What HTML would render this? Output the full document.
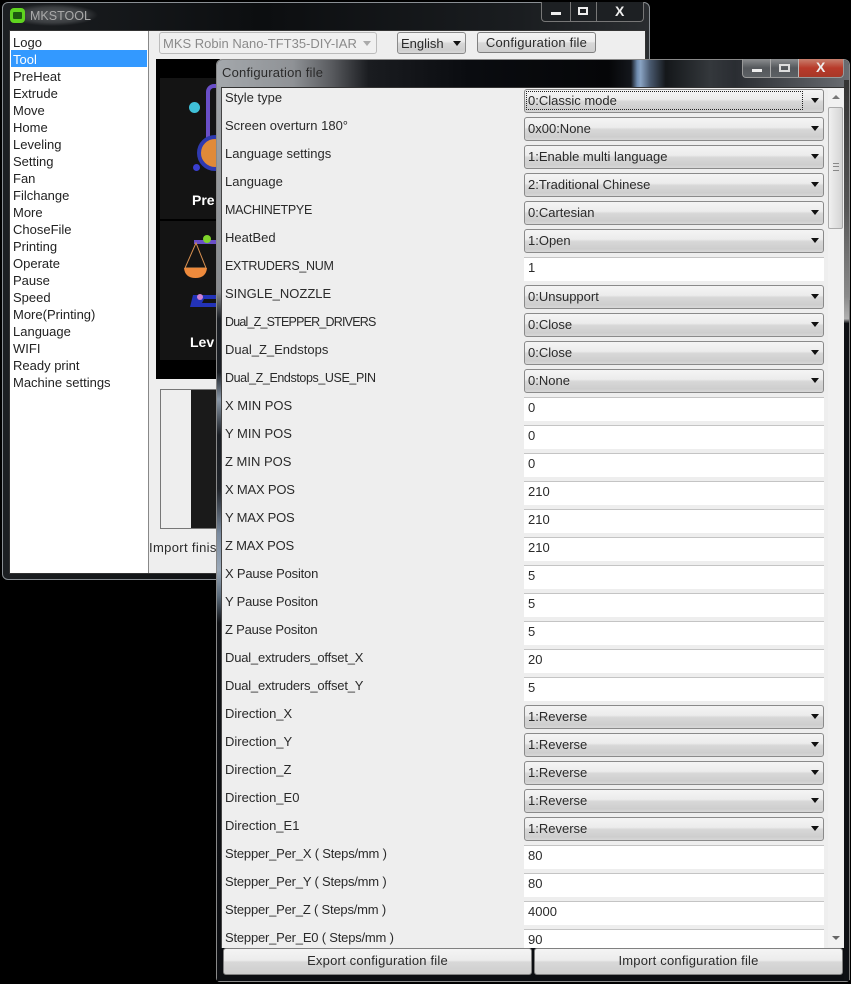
<!DOCTYPE html>
<html><head><meta charset="utf-8"><style>
html,body{margin:0;padding:0;background:#000;width:851px;height:984px;overflow:hidden}
body{position:relative;font:13px/16px "Liberation Sans",sans-serif;color:#2a2a2a}
div{position:absolute;box-sizing:border-box;white-space:nowrap}
.w1{left:2px;top:2px;width:648px;height:578px;border:1px solid #8a8f94;border-radius:6px;background:linear-gradient(90deg,#1c1f22,#0c0e10 40%,#1a1d20 80%,#2a2d30)}
.li{left:13px;height:17px;line-height:17px;color:#222;margin-top:1px}
.s{left:524px;width:300px;height:24px;border:1px solid #8a8a8a;border-radius:3px;background:linear-gradient(#f4f4f4 0,#ececec 42%,#d8d8d8 52%,#cecece 85%,#d8d8d8 100%);padding-left:3px;line-height:21px}
.s:after{content:"";position:absolute;right:4px;top:8px;border-left:4px solid transparent;border-right:4px solid transparent;border-top:5px solid #111}
.i{left:524px;width:300px;height:24px;background:#fff;border-top:1px solid #c4c4c4;padding-left:4px;line-height:20px}
.l{left:225px;height:16px;margin-top:1px}
.c{font-size:12.500px;letter-spacing:-.3px}
.n{letter-spacing:-.2px}
.b{border:1px solid #808080;border-radius:3px;background:linear-gradient(#f4f4f4 0,#ececec 45%,#d8d8d8 52%,#cecece 100%);text-align:center;letter-spacing:.2px}
</style></head><body>
<div class="w1"></div>
<div style="left:8px;top:4px;width:90px;height:22px;background:radial-gradient(closest-side,#5a5d60,#3a3d40 70%,transparent);border-radius:8px"></div>
<div style="left:10px;top:8px;width:15px;height:15px;background:#5fd41f;border-radius:4px"></div>
<div style="left:13px;top:12px;width:9px;height:7px;background:#1d5a10;border-radius:1px"></div>
<div style="left:30px;top:8px;color:#a9a9a9;font-size:12.500px">MKSTOOL</div>
<div style="left:541px;top:2px;width:103px;height:20px;border:1px solid #777;border-top:0;border-radius:0 0 4px 4px;background:#1d2023"></div>
<div style="left:570px;top:2px;width:1px;height:19px;background:#777"></div>
<div style="left:596px;top:2px;width:1px;height:19px;background:#777"></div>
<div style="left:551px;top:12px;width:10px;height:3px;background:#eee"></div>
<div style="left:578px;top:7px;width:10px;height:8px;border:2px solid #eee"></div>
<div style="left:615px;top:1px;color:#eee;font-weight:bold;font-size:14px;line-height:20px">X</div>

<div style="left:9px;top:30px;width:637px;height:544px;background:#eee;border:1px solid #333"></div>
<div style="left:10px;top:31px;width:139px;height:542px;background:#fff;border-right:1px solid #888"></div>
<div style="left:11px;top:50px;width:136px;height:17px;background:#3399ff"></div>
<div class="li" style="top:33px">Logo</div>
<div class="li" style="top:50px;color:#fff">Tool</div>
<div class="li" style="top:67px">PreHeat</div>
<div class="li" style="top:84px">Extrude</div>
<div class="li" style="top:101px">Move</div>
<div class="li" style="top:118px">Home</div>
<div class="li" style="top:135px">Leveling</div>
<div class="li" style="top:152px">Setting</div>
<div class="li" style="top:169px">Fan</div>
<div class="li" style="top:186px">Filchange</div>
<div class="li" style="top:203px">More</div>
<div class="li" style="top:220px">ChoseFile</div>
<div class="li" style="top:237px">Printing</div>
<div class="li" style="top:254px">Operate</div>
<div class="li" style="top:271px">Pause</div>
<div class="li" style="top:288px">Speed</div>
<div class="li" style="top:305px">More(Printing)</div>
<div class="li" style="top:322px">Language</div>
<div class="li" style="top:339px">WIFI</div>
<div class="li" style="top:356px">Ready print</div>
<div class="li" style="top:373px">Machine settings</div>

<div style="left:159px;top:32px;width:218px;height:22px;border:1px solid #bbb;border-radius:3px;background:#f0f0f0;color:#8a8a8a;padding-left:3px;line-height:21px">MKS Robin Nano-TFT35-DIY-IAR</div>
<div style="left:363px;top:41px;border-left:4px solid transparent;border-right:4px solid transparent;border-top:5px solid #aaa"></div>
<div class="s" style="left:397px;top:32px;width:69px;height:22px;line-height:22px">English</div>
<div class="b" style="left:477px;top:32px;width:119px;height:21px;line-height:20px">Configuration file</div>

<div style="left:156px;top:59px;width:64px;height:320px;background:#000"></div>
<div style="left:160px;top:78px;width:60px;height:141px;background:#141414"></div>
<div style="left:160px;top:221px;width:60px;height:139px;background:#141414"></div>
<div style="left:189px;top:102px;width:11px;height:11px;border-radius:50%;background:#3fc0d8"></div>
<div style="left:206px;top:84px;width:14px;height:60px;border-left:4px solid #6a4fc8;border-top:4px solid #6a4fc8;border-radius:8px 0 0 0"></div>
<div style="left:197px;top:135px;width:36px;height:36px;border-radius:50%;background:#e08a38;border:4px solid #2f3ab0"></div>
<div style="left:193px;top:164px;width:7px;height:7px;border-radius:50%;background:#3a3fd0"></div>
<div style="left:192px;top:192px;color:#fff;font-weight:bold;font-size:14px">Pre</div>
<svg style="position:absolute;left:180px;top:232px" width="40" height="80" viewBox="0 0 40 80"><path d="M14 10H40" stroke="#6a4fc8" stroke-width="4"/><path d="M16 11L5 36H26Z" fill="none" stroke="#d89050"/><path d="M4 36H27Q26 46 15.500 46Q5 46 4 36Z" fill="#ee8a3c"/><circle cx="27" cy="7" r="4" fill="#7fd42a"/><path d="M13 63H40V67H24L22 71H40V75H10Z" fill="#2333b8"/><circle cx="20" cy="65" r="3" fill="#d080d0"/></svg>
<div style="left:190px;top:334px;color:#fff;font-weight:bold;font-size:14px">Lev</div>

<div style="left:160px;top:389px;width:60px;height:140px;background:#eee;border:1px solid #777"></div>
<div style="left:191px;top:390px;width:29px;height:138px;background:#1a1a1a"></div>
<div style="left:149px;top:540px;width:67px;overflow:hidden;letter-spacing:.35px">Import finish</div>

<div style="left:216px;top:59px;width:634px;height:923px;border:1px solid #888;border-radius:6px 6px 4px 4px;background:#0c0e12"></div>
<div style="left:217px;top:60px;width:632px;height:28px;border-radius:5px 5px 0 0;background:linear-gradient(90deg,#a4a8ac 0,#8f9296 12%,#5a5c60 18%,#1a1c20 24%,#0a0c10 40%,#050608 62%,#14171c 65.500%,#6f8cb0 66.500%,#8aa4c4 67%,#4a5a70 68.500%,#14171a 71%,#34383c 78%,#2a2d32 82%,#6a6d72 100%)"></div>
<div style="left:217px;top:86px;width:5px;height:895px;background:linear-gradient(#a0a4a8 0,#888b8f 23%,#1a1e24 26%,#1a1e24 32%,#8a98a8 35%,#1a1e24 39%,#20242a 45%,#7a8a9e 50%,#9aa8b8 54%,#5a6a7a 57%,#0e1014 60%,#0c0e12 100%)"></div>
<div style="left:844px;top:80px;width:5px;height:901px;background:linear-gradient(#333 0,#555 14%,#8a8a8a 24%,#b0b0b0 26.500%,#0e1014 27%,#0e1014 100%)"></div>
<div style="left:849px;top:300px;width:1px;height:680px;background:#777"></div>
<div style="left:222px;top:65px;color:#2a2a2a;letter-spacing:.2px">Configuration file</div>
<div style="left:742px;top:59px;width:102px;height:19px;border:1px solid #999;border-top:0;border-radius:0 0 4px 4px;background:linear-gradient(#8c8e90,#55585c 50%,#5c6064)"></div>
<div style="left:770px;top:59px;width:1px;height:18px;background:#aaa"></div>
<div style="left:798px;top:59px;width:45px;height:18px;background:linear-gradient(#c8806e,#b83a2a 50%,#a83828);border-left:1px solid #bbb;border-radius:0 0 4px 0"></div>
<div style="left:752px;top:69px;width:10px;height:3px;background:#eee"></div>
<div style="left:779px;top:64px;width:11px;height:8px;border:2px solid #ddd"></div>
<div style="left:816px;top:58px;color:#eee;font-weight:bold;font-size:14px;line-height:19px">X</div>

<div style="left:221px;top:87px;width:623px;height:861px;background:#eee;border-left:1px solid #444;border-top:1px solid #333;overflow:hidden"></div>
<div style="left:828px;top:88px;width:16px;height:859px;background:#f1f1f1"></div>
<div style="left:828px;top:107px;width:15px;height:122px;background:linear-gradient(90deg,#f0f0f0,#d4d4d4);border:1px solid #aaa;border-radius:2px"></div>
<div style="left:833px;top:163px;width:6px;height:8px;border-top:1px solid #888;border-bottom:1px solid #888"></div>
<div style="left:833px;top:166px;width:6px;height:1px;background:#888"></div>
<div style="left:832px;top:95px;border-left:4px solid transparent;border-right:4px solid transparent;border-bottom:4px solid #777"></div>
<div style="left:832px;top:936px;border-left:4px solid transparent;border-right:4px solid transparent;border-top:4px solid #666"></div>

<div class="l" style="top:89px">Style type</div>
<div class="l" style="top:117px">Screen overturn 180°</div>
<div class="l" style="top:145px">Language settings</div>
<div class="l" style="top:173px">Language</div>
<div class="l c" style="top:201px">MACHINETPYE</div>
<div class="l" style="top:229px">HeatBed</div>
<div class="l c" style="top:257px">EXTRUDERS_NUM</div>
<div class="l" style="top:285px">SINGLE_NOZZLE</div>
<div class="l c" style="top:313px;letter-spacing:-.8px">Dual_Z_STEPPER_DRIVERS</div>
<div class="l" style="top:341px">Dual_Z_Endstops</div>
<div class="l c" style="top:369px;letter-spacing:-.4px">Dual_Z_Endstops_USE_PIN</div>
<div class="l" style="top:397px">X MIN POS</div>
<div class="l" style="top:425px">Y MIN POS</div>
<div class="l" style="top:453px">Z MIN POS</div>
<div class="l n" style="top:481px">X MAX POS</div>
<div class="l n" style="top:509px">Y MAX POS</div>
<div class="l n" style="top:537px">Z MAX POS</div>
<div class="l n" style="top:565px">X Pause Positon</div>
<div class="l n" style="top:593px">Y Pause Positon</div>
<div class="l n" style="top:621px">Z Pause Positon</div>
<div class="l n" style="top:649px">Dual_extruders_offset_X</div>
<div class="l n" style="top:677px">Dual_extruders_offset_Y</div>
<div class="l" style="top:705px">Direction_X</div>
<div class="l" style="top:733px">Direction_Y</div>
<div class="l" style="top:761px">Direction_Z</div>
<div class="l" style="top:789px">Direction_E0</div>
<div class="l" style="top:817px">Direction_E1</div>
<div class="l n" style="top:845px">Stepper_Per_X ( Steps/mm )</div>
<div class="l n" style="top:873px">Stepper_Per_Y ( Steps/mm )</div>
<div class="l n" style="top:901px">Stepper_Per_Z ( Steps/mm )</div>
<div class="l n" style="top:929px">Stepper_Per_E0 ( Steps/mm )</div>

<div class="s" style="top:89px">0:Classic mode</div>
<div style="left:526px;top:91px;width:277px;height:19px;border:1px dotted #222"></div>
<div class="s" style="top:117px">0x00:None</div>
<div class="s" style="top:145px">1:Enable multi language</div>
<div class="s" style="top:173px">2:Traditional Chinese</div>
<div class="s" style="top:201px">0:Cartesian</div>
<div class="s" style="top:229px">1:Open</div>
<div class="i" style="top:257px">1</div>
<div class="s" style="top:285px">0:Unsupport</div>
<div class="s" style="top:313px">0:Close</div>
<div class="s" style="top:341px">0:Close</div>
<div class="s" style="top:369px">0:None</div>
<div class="i" style="top:397px">0</div>
<div class="i" style="top:425px">0</div>
<div class="i" style="top:453px">0</div>
<div class="i" style="top:481px">210</div>
<div class="i" style="top:509px">210</div>
<div class="i" style="top:537px">210</div>
<div class="i" style="top:565px">5</div>
<div class="i" style="top:593px">5</div>
<div class="i" style="top:621px">5</div>
<div class="i" style="top:649px">20</div>
<div class="i" style="top:677px">5</div>
<div class="s" style="top:705px">1:Reverse</div>
<div class="s" style="top:733px">1:Reverse</div>
<div class="s" style="top:761px">1:Reverse</div>
<div class="s" style="top:789px">1:Reverse</div>
<div class="s" style="top:817px">1:Reverse</div>
<div class="i" style="top:845px">80</div>
<div class="i" style="top:873px">80</div>
<div class="i" style="top:901px">4000</div>
<div class="i" style="top:929px;height:19px;overflow:hidden">90</div>

<div class="b" style="left:223px;top:948px;width:309px;height:27px;line-height:24px">Export configuration file</div>
<div class="b" style="left:534px;top:948px;width:309px;height:27px;line-height:24px">Import configuration file</div>
</body></html>
